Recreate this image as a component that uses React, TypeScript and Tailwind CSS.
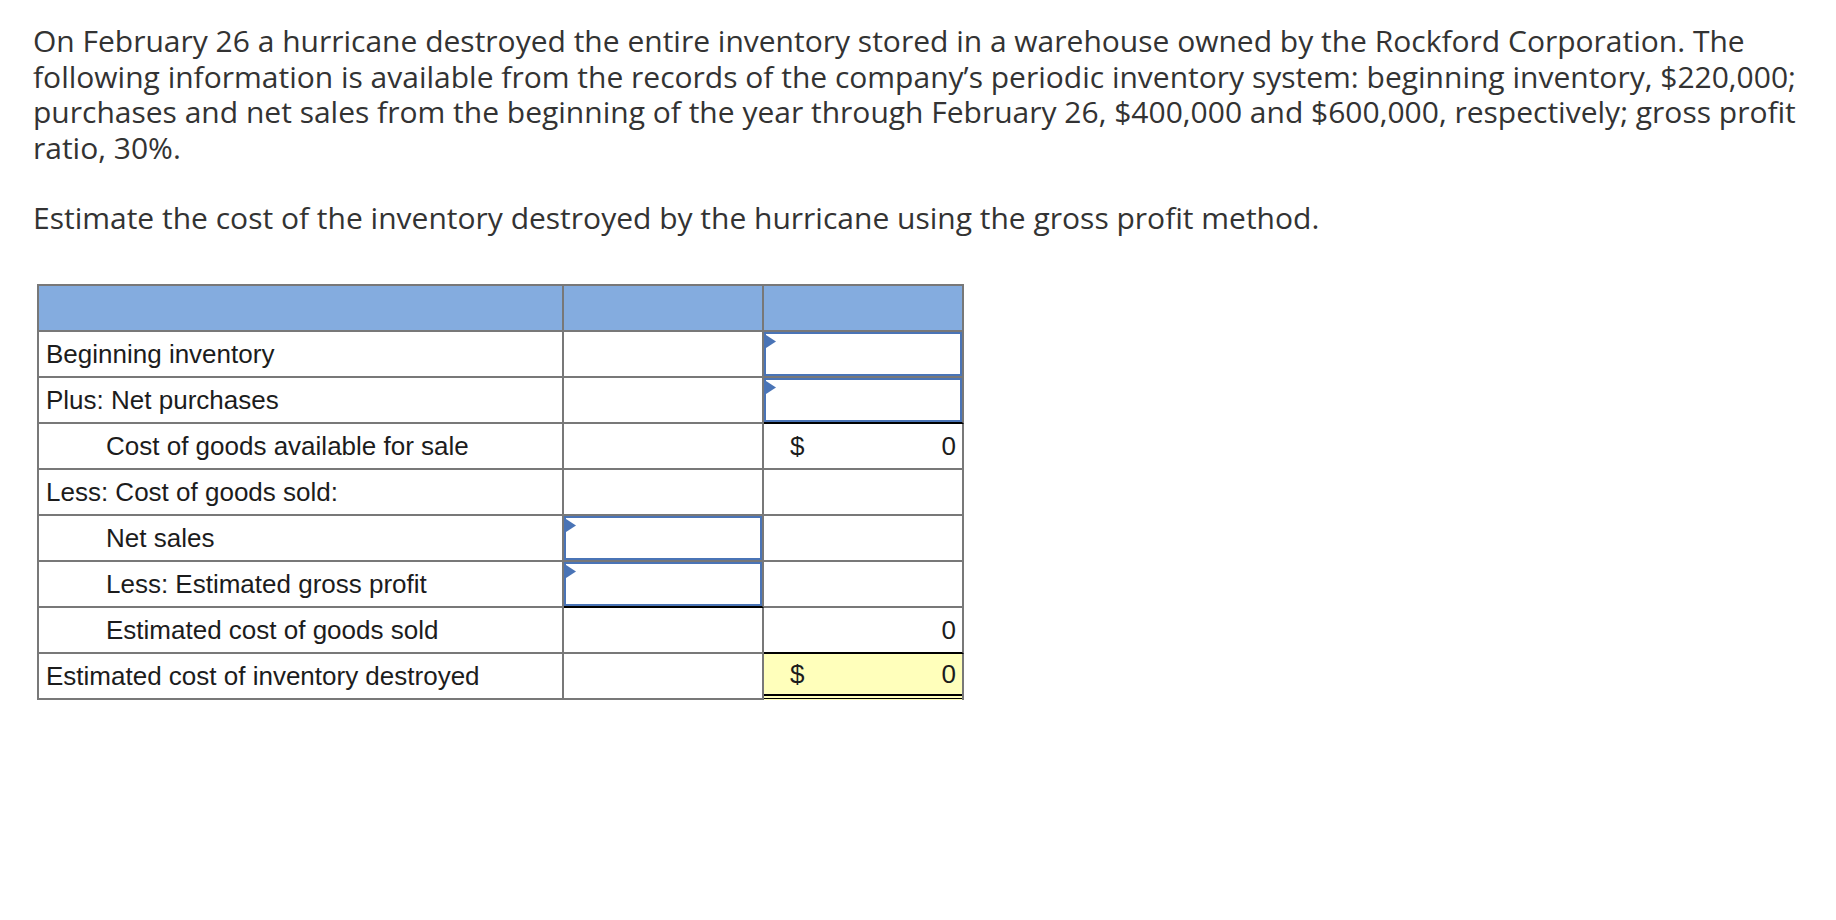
type Cell =
  | { kind: "empty" }
  | { kind: "input" }
  | { kind: "amount"; dollar?: boolean; value: string };

interface Row {
  label: string;
  indent?: boolean;
  mid: Cell;
  right: Cell;
  midRule?: boolean;
  rightRule?: boolean;
  total?: boolean;
}

const rows: Row[] = [
  { label: "Beginning inventory", mid: { kind: "empty" }, right: { kind: "input" } },
  { label: "Plus: Net purchases", mid: { kind: "empty" }, right: { kind: "input" }, rightRule: true },
  {
    label: "Cost of goods available for sale",
    indent: true,
    mid: { kind: "empty" },
    right: { kind: "amount", dollar: true, value: "0" },
  },
  { label: "Less: Cost of goods sold:", mid: { kind: "empty" }, right: { kind: "empty" } },
  { label: "Net sales", indent: true, mid: { kind: "input" }, right: { kind: "empty" } },
  { label: "Less: Estimated gross profit", indent: true, mid: { kind: "input" }, right: { kind: "empty" }, midRule: true },
  {
    label: "Estimated cost of goods sold",
    indent: true,
    mid: { kind: "empty" },
    right: { kind: "amount", value: "0" },
    rightRule: true,
  },
  {
    label: "Estimated cost of inventory destroyed",
    mid: { kind: "empty" },
    right: { kind: "amount", dollar: true, value: "0" },
    total: true,
  },
];

function InputBox() {
  return (
    <div className="relative h-full w-full border-2 border-[#4a74b6] bg-white">
      <svg className="absolute left-0 top-[1px]" width="10" height="13" viewBox="0 0 10 13">
        <polygon points="0,0 10,6.5 0,13" fill="#4a74b6" />
      </svg>
      <input
        type="text"
        aria-label="answer"
        className="h-full w-full bg-transparent px-[5px] text-right outline-none"
      />
    </div>
  );
}

function Amount({ cell }: { cell: Extract<Cell, { kind: "amount" }> }) {
  return (
    <div className="flex h-full items-center justify-between pl-[26px] pr-[6px]">
      <span>{cell.dollar ? "$" : ""}</span>
      <span>{cell.value}</span>
    </div>
  );
}

function Body({ cell }: { cell: Cell }) {
  if (cell.kind === "input") return <InputBox />;
  if (cell.kind === "amount") return <Amount cell={cell} />;
  return null;
}

export default function App() {
  return (
    <div className="min-h-screen bg-white pb-10 pl-[33px] pr-[10px] pt-[23px] font-['Open_Sans',sans-serif] text-[30px] leading-[35.5px] text-[#333]">
      <p className="mb-[35px]">
        On February 26 a hurricane destroyed the entire inventory stored in a warehouse owned by the Rockford
        Corporation. The following information is available from the records of the company’s periodic inventory
        system: beginning inventory, $220,000; purchases and net sales from the beginning of the year through
        February 26, $400,000 and $600,000, respectively; gross profit ratio, 30%.
      </p>
      <p>Estimate the cost of the inventory destroyed by the hurricane using the gross profit method.</p>

      <div className="ml-[4px] mt-[48px] grid w-fit grid-cols-[525px_200px_200px] border-l-2 border-t-2 border-[#787878] font-['Liberation_Sans',Arial,sans-serif] text-[26px] leading-none text-[#1c1c1c]">
        <div className="h-[46px] border-b-2 border-r-2 border-[#787878] bg-[#84acdf]" />
        <div className="h-[46px] border-b-2 border-r-2 border-[#787878] bg-[#84acdf]" />
        <div className="h-[46px] border-b-2 border-r-2 border-[#787878] bg-[#84acdf]" />

        {rows.map((r) => (
          <div key={r.label} className="contents">
            <div
              className={`flex h-[46px] items-center border-b-2 border-r-2 border-[#787878] ${
                r.indent ? "pl-[67px]" : "pl-[7px]"
              }`}
            >
              {r.label}
            </div>
            <div
              className={`h-[46px] border-r-2 border-b-2 border-r-[#787878] ${
                r.midRule ? "border-b-black" : "border-b-[#787878]"
              }`}
            >
              <Body cell={r.mid} />
            </div>
            {r.total ? (
              <div className="flex h-[46px] flex-col border-r-2 border-[#787878] bg-[#ffffbb]">
                <div className="min-h-0 flex-1">
                  <Body cell={r.right} />
                </div>
                <div className="h-[2px] bg-black" />
                <div className="h-[2px]" />
                <div className="h-[1px] bg-black" />
                <div className="h-[1px]" />
              </div>
            ) : (
              <div
                className={`h-[46px] border-r-2 border-b-2 border-r-[#787878] ${
                  r.rightRule ? "border-b-black" : "border-b-[#787878]"
                }`}
              >
                <Body cell={r.right} />
              </div>
            )}
          </div>
        ))}
      </div>
    </div>
  );
}
